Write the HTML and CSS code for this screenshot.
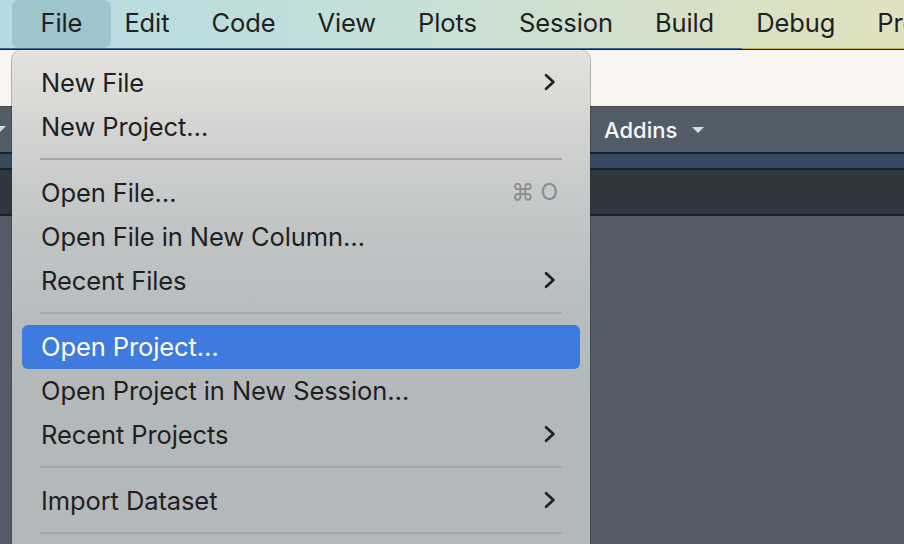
FILE: index.html
```html
<!DOCTYPE html>
<html>
<head>
<meta charset="utf-8">
<link rel="stylesheet" href="styles.css">
</head>
<body>
<div class="screen">
  <nav class="menubar">
    <span class="mb-item active">File</span>
    <span class="mb-item">Edit</span>
    <span class="mb-item">Code</span>
    <span class="mb-item">View</span>
    <span class="mb-item">Plots</span>
    <span class="mb-item">Session</span>
    <span class="mb-item">Build</span>
    <span class="mb-item">Debug</span>
    <span class="mb-item">Profile</span>
  </nav>
  <div class="mb-line"></div>
  <div class="window-top"></div>
  <div class="toolbar">
    <span class="tb-caret left"></span>
    <span class="tb-addins">Addins <span class="tb-caret"></span></span>
  </div>
  <div class="tabstrip"></div>
  <div class="tabbar"></div>
  <div class="workspace"></div>

  <div class="menu">
    <div class="mi"><span>New File</span><svg class="chev" viewBox="0 0 12 16"><path d="M2.5 2 L9 8 L2.5 14"/></svg></div>
    <div class="mi"><span>New Project…</span></div>
    <div class="sep"></div>
    <div class="mi"><span>Open File…</span><span class="sc">⌘ O</span></div>
    <div class="mi"><span>Open File in New Column…</span></div>
    <div class="mi"><span>Recent Files</span><svg class="chev" viewBox="0 0 12 16"><path d="M2.5 2 L9 8 L2.5 14"/></svg></div>
    <div class="sep"></div>
    <div class="mi hl"><span>Open Project…</span></div>
    <div class="mi"><span>Open Project in New Session…</span></div>
    <div class="mi"><span>Recent Projects</span><svg class="chev" viewBox="0 0 12 16"><path d="M2.5 2 L9 8 L2.5 14"/></svg></div>
    <div class="sep"></div>
    <div class="mi"><span>Import Dataset</span><svg class="chev" viewBox="0 0 12 16"><path d="M2.5 2 L9 8 L2.5 14"/></svg></div>
    <div class="sep"></div>
  </div>
</div>
</body>
</html>
```

FILE: styles.css
```css
* { box-sizing: border-box; }
html, body { margin: 0; padding: 0; }
body {
  width: 904px;
  height: 544px;
  overflow: hidden;
  font-family: "Inter", "Noto Sans", sans-serif;
  background: #525b66;
}
.screen {
  position: relative;
  width: 904px;
  height: 544px;
  overflow: hidden;
  display: flex;
  flex-direction: column;
}
.menubar {
  height: 48px;
  flex: none;
  display: flex;
  align-items: stretch;
  padding-left: 19.5px;
  background: linear-gradient(90deg, #b4dbe2 0%, #c1dfdb 35%, #cde0cf 60%, #d8e1c5 80%, #e0e1be 100%);
  white-space: nowrap;
}
.mb-item {
  display: flex;
  align-items: center;
  padding: 0 21px 4px 21px;
  font-size: 25.5px;
  color: #1f2124;
  letter-spacing: -0.1px;
}
.mb-item.active {
  background: #9fc4cc;
  border-radius: 7px;
  padding: 0 28.5px 4px 28.5px;
  margin: 0 -7.5px;
}
.mb-line {
  height: 2px;
  flex: none;
  background: linear-gradient(90deg, #3c6c98 0%, #3c6c98 82%, #c9b84e 82.2%, #c9b84e 100%);
  border-bottom: 1px solid #222;
}
.window-top {
  height: 56px;
  flex: none;
  background: #f8f4f0;
}
.toolbar {
  height: 46px;
  flex: none;
  background: #525c66;
  border-top: 1px solid #3e4650;
  position: relative;
  display: flex;
  align-items: center;
  padding-left: 604px;
}
.tb-addins {
  color: #f4f6f8;
  font-size: 22px;
  font-weight: 500;
  display: flex;
  align-items: center;
  gap: 15px;
}
.tb-caret {
  display: inline-block;
  width: 0;
  height: 0;
  border-left: 6px solid transparent;
  border-right: 6px solid transparent;
  border-top: 6px solid #d8dbde;
}
.tb-caret.left {
  position: absolute;
  left: -6px;
  top: 19px;
}
.tabstrip {
  height: 18px;
  flex: none;
  background: #374a60;
  border-top: 2px solid #17202c;
  border-bottom: 2px solid #17202c;
}
.tabbar {
  height: 46px;
  flex: none;
  background: #30363e;
  border-bottom: 2px solid #17202c;
}
.workspace {
  flex: 1;
  background: #525b66;
}
.menu {
  position: absolute;
  left: 12px;
  top: 50px;
  width: 578px;
  height: 520px;
  padding: 11px 10px 0 10px;
  border-radius: 11px 11px 0 0;
  background: linear-gradient(180deg, #e4e2de 0px, #d3d4d2 80px, #c0c4c5 180px, #b6bcbe 280px, #b3b9bb 360px);
  box-shadow: 0 0 0 1px rgba(40, 45, 50, 0.35), inset 0 1px 0 rgba(255,255,255,0.4);
}
.mi {
  height: 44px;
  display: flex;
  align-items: center;
  justify-content: space-between;
  padding: 0 22px 2px 19px;
  font-size: 25.5px;
  color: #1f2022;
  border-radius: 6px;
  letter-spacing: -0.1px;
}
.mi.hl {
  background: #3f7ade;
  color: #ffffff;
}
.sc {
  color: #8a8d90;
  font-size: 23px;
}
.chev {
  width: 14px;
  height: 18px;
  fill: none;
  stroke: #1f2022;
  stroke-width: 2.4;
  stroke-linecap: round;
  stroke-linejoin: round;
  margin-right: 1px;
}
.sep {
  height: 22px;
  padding: 9px 18px 0 18px;
}
.sep::before {
  content: "";
  display: block;
  height: 2px;
  background: #a2a7aa;
}
```
